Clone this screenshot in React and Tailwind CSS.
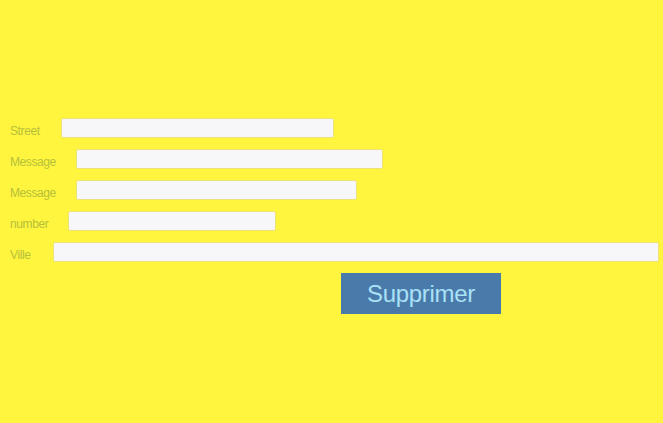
import React from "react";

const fields = [
  { label: "Street", labelW: "w-[51px]", width: "w-[273px]" },
  { label: "Message", labelW: "w-[66px]", width: "w-[307px]" },
  { label: "Message", labelW: "w-[66px]", width: "w-[281px]" },
  { label: "number", labelW: "w-[58px]", width: "w-[208px]" },
  { label: "Ville", labelW: "w-[43px]", width: "w-[606px]" },
];

const App = () => {
  return (
    <div
      className="min-h-screen w-full bg-[#fff53e] pt-[118px] pl-[10px]"
      style={{ fontFamily: '"Liberation Sans", Arial, sans-serif' }}
    >
      <form className="flex flex-col gap-[11px]">
        {fields.map((f, i) => (
          <div key={i} className="flex items-center h-[20px]">
            <label className={`${f.labelW} shrink-0 text-[12px] tracking-[-0.4px] text-[#b6c03a] mt-[5px]`}>
              {f.label}
            </label>
            <input
              type="text"
              className={`${f.width} h-[20px] bg-[#f7f7f9] border border-[#ebe37a] rounded-[2px] outline-none`}
            />
          </div>
        ))}
        <div className="pl-[331px]">
          <button
            type="button"
            className="w-[160px] h-[41px] bg-[#4a7aaa] text-[#a9e1f6] text-[24px] tracking-[-0.3px] flex items-center justify-center"
          >
            Supprimer
          </button>
        </div>
      </form>
    </div>
  );
};

export default App;
